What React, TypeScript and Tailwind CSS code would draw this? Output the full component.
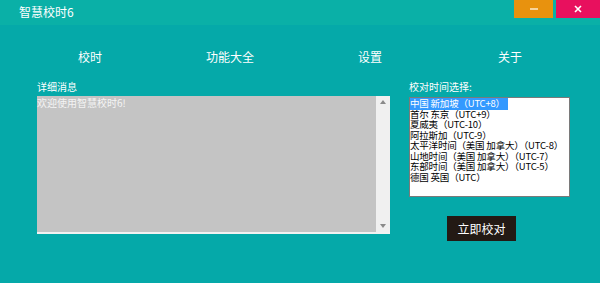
import React from "react";

const items = [
  "中国 新加坡（UTC+8）",
  "首尔 东京（UTC+9）",
  "夏威夷（UTC-10）",
  "阿拉斯加（UTC-9）",
  "太平洋时间（美国 加拿大）（UTC-8）",
  "山地时间（美国 加拿大）（UTC-7）",
  "东部时间（美国 加拿大）（UTC-5）",
  "德国 英国（UTC）",
];

export default function App() {
  return (
    <div
      className="w-[600px] h-[283px] bg-[#05a9a9] overflow-hidden text-white"
      style={{ fontFamily: '"Noto Sans CJK SC", "Noto Sans", sans-serif' }}
    >
      {/* title bar */}
      <div className="h-[25px] bg-[#0ab0a7] flex items-start justify-between">
        <div className="pl-[19px] pt-[4px] text-[12px] leading-[16px]">智慧校时6</div>
        <div className="flex gap-[3px]">
          <div className="w-[39px] h-[18px] bg-[#e8920e] flex items-center justify-center">
            <div className="w-[8px] h-[2px] bg-[#f7d49c]" />
          </div>
          <div className="w-[44px] h-[18px] bg-[#e8105e] flex items-center justify-center">
            <svg width="8" height="8" viewBox="0 0 8 8">
              <path d="M1 1 L7 7 M7 1 L1 7" stroke="#ffffff" strokeWidth="1.6" />
            </svg>
          </div>
        </div>
      </div>

      {/* nav */}
      <div className="mt-[25px] px-[20px] grid grid-cols-4 text-center text-[12px] leading-[14px]">
        <div>校时</div>
        <div>功能大全</div>
        <div>设置</div>
        <div>关于</div>
      </div>

      {/* main */}
      <div className="mt-[17px] pl-[37px] flex gap-[19px]">
        <div className="w-[353px] flex flex-col">
          <div className="text-[10px] leading-[12px] h-[15px]">详细消息</div>
          <div className="h-[138px] flex bg-white border-b-[2px] border-[#f2f2f2]">
            <div className="flex-1 bg-[#c4c4c4] text-[10px] leading-[12px] pt-[1px] text-[#f4f4f4]">
              欢迎使用智慧校时6!
            </div>
            <div className="w-[14px] bg-[#f0f0f0] flex flex-col items-center justify-between py-[4px]">
              <svg width="6" height="4" viewBox="0 0 6 4">
                <path d="M0 4 L3 0 L6 4 Z" fill="#8a8a8a" />
              </svg>
              <svg width="6" height="4" viewBox="0 0 6 4">
                <path d="M0 0 L3 4 L6 0 Z" fill="#8a8a8a" />
              </svg>
            </div>
          </div>
        </div>

        <div className="w-[161px] flex flex-col">
          <div className="text-[10px] leading-[12px] h-[16px]">校对时间选择:</div>
          <div className="h-[100px] bg-white border border-[#7a7a7a] text-[9.5px] leading-[10.5px] text-black overflow-hidden">
            {items.map((t, i) => (
              <div key={i} className="whitespace-nowrap tracking-[-0.2px]">
                <span className={i === 0 ? "bg-[#3399ff] text-white pr-[3px]" : ""}>{t}</span>
              </div>
            ))}
          </div>
          <div className="mt-[19px] ml-[38px] w-[69px] h-[25px] bg-[#231a14] flex items-center justify-center text-[12px]">
            立即校对
          </div>
        </div>
      </div>
    </div>
  );
}
